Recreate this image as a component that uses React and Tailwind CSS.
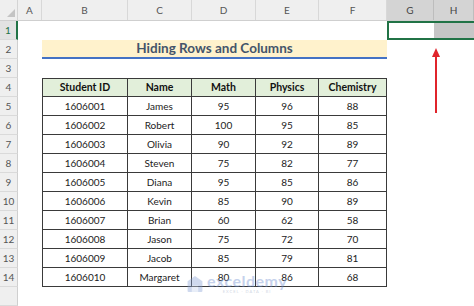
import React from "react";

const data = [
  ["1606001", "James", "95", "96", "88"],
  ["1606002", "Robert", "100", "95", "85"],
  ["1606003", "Olivia", "90", "92", "89"],
  ["1606004", "Steven", "75", "82", "77"],
  ["1606005", "Diana", "95", "85", "86"],
  ["1606006", "Kevin", "85", "90", "89"],
  ["1606007", "Brian", "60", "62", "58"],
  ["1606008", "Jason", "75", "72", "70"],
  ["1606009", "Jacob", "85", "79", "81"],
  ["1606010", "Margaret", "80", "86", "68"],
];

const tw = ["w-[86px]", "w-[64px]", "w-[64px]", "w-[63px]", "w-[68px]"];

function RowHead({ n, active }) {
  return (
    <div
      className={
        "w-[18px] shrink-0 h-full flex items-center justify-center text-[10px] border-b border-b-[#dadada] " +
        (active
          ? "bg-[#e2e2e2] text-[#217346] border-r-2 border-r-[#217346]"
          : "bg-[#efefef] text-[#555] border-r border-r-[#cfcfcf]")
      }
    >
      {n}
    </div>
  );
}

function Row({ n, children, active }) {
  return (
    <div className="flex h-[19px]">
      <RowHead n={n} active={active} />
      {children}
    </div>
  );
}

export default function App() {
  const cols = [
    ["A", "w-[24px]", false],
    ["B", "w-[86px]", false],
    ["C", "w-[64px]", false],
    ["D", "w-[64px]", false],
    ["E", "w-[63px]", false],
    ["F", "w-[68px]", false],
    ["G", "w-[47px]", true],
    ["H", "w-[40px]", true],
  ];
  return (
    <div className="relative w-[474px] h-[306px] overflow-hidden bg-white font-['Lato','Liberation_Sans',sans-serif] text-[#222]">
      {/* column headers */}
      <div className="flex h-[21px] border-b border-[#cfcfcf]">
        <div className="w-[18px] shrink-0 bg-[#efefef] border-r border-[#d4d4d4] relative">
          <div className="absolute right-[2px] bottom-[3px] w-0 h-0 border-l-[8px] border-l-transparent border-b-[8px] border-b-[#c4c4c4]" />
        </div>
        {cols.map(([l, w, sel]) => (
          <div
            key={l}
            className={
              w +
              " shrink-0 flex items-center justify-center text-[10px] border-r " +
              (sel
                ? "bg-[#d4d4d4] text-[#444] border-[#bdbdbd]"
                : "bg-[#efefef] text-[#555] border-[#d8d8d8]")
            }
          >
            {l}
          </div>
        ))}
      </div>

      {/* row 1 */}
      <Row n="1" active>
        <div className="w-[24px]" />
        <div className="w-[345px]" />
        <div className="flex-1 flex border-2 border-r-0 border-[#217346]">
          <div className="w-[45px] bg-white" />
          <div className="flex-1 bg-[#c6c6c6]" />
        </div>
      </Row>

      {/* row 2 title */}
      <Row n="2">
        <div className="w-[24px]" />
        <div className="w-[345px] bg-[#fff2cc] border-b-2 border-[#4472c4] flex items-center justify-center text-[13.5px] font-bold text-[#44546a]">
          Hiding Rows and Columns
        </div>
      </Row>

      <Row n="3" />

      {/* table header */}
      <Row n="4">
        <div className="w-[24px]" />
        {["Student ID", "Name", "Math", "Physics", "Chemistry"].map((h, i) => (
          <div
            key={h}
            className={
              tw[i] +
              " shrink-0 bg-[#e2efda] border-t border-r border-b border-[#3a3a3a] flex items-center justify-center text-[10.5px] font-bold text-[#111] " +
              (i === 0 ? "border-l" : "")
            }
          >
            {h}
          </div>
        ))}
      </Row>

      {data.map((r, ri) => (
        <Row key={ri} n={String(ri + 5)}>
          <div className="w-[24px]" />
          {r.map((c, i) => (
            <div
              key={i}
              className={
                tw[i] +
                " shrink-0 border-r border-b border-[#3a3a3a] flex items-center justify-center text-[10px] text-[#222] " +
                (i === 0 ? "border-l" : "")
              }
            >
              {c}
            </div>
          ))}
        </Row>
      ))}

      <Row n="" />

      {/* red arrow */}
      <svg className="absolute left-[430px] top-[48px]" width="12" height="66" viewBox="0 0 12 66">
        <line x1="6" y1="8" x2="6" y2="65" stroke="#e0242b" strokeWidth="2" />
        <polygon points="6,0 2,9 10,9" fill="#e0242b" />
      </svg>

      {/* watermark */}
      <div className="absolute left-[186px] top-[273px] flex items-center gap-[3px] opacity-40 pointer-events-none">
        <svg width="18" height="18" viewBox="0 0 16 17">
          <path d="M8 1 L15 6 L15 15 Q15 16 14 16 L2 16 Q1 16 1 15 L1 6 Z" fill="#8aa3d6" />
          <path d="M5 16 L5 10 L11 10 L11 16 Z" fill="#c9d6ef" />
        </svg>
        <div className="flex flex-col items-center leading-none">
          <span className="text-[16px] font-bold text-[#6f8fd0] tracking-[0.5px]">exceldemy</span>
          <span className="text-[4px] text-[#8a9ab8] tracking-[1px] mt-[1px]">EXCEL · DATA · BI</span>
        </div>
      </div>
    </div>
  );
}
